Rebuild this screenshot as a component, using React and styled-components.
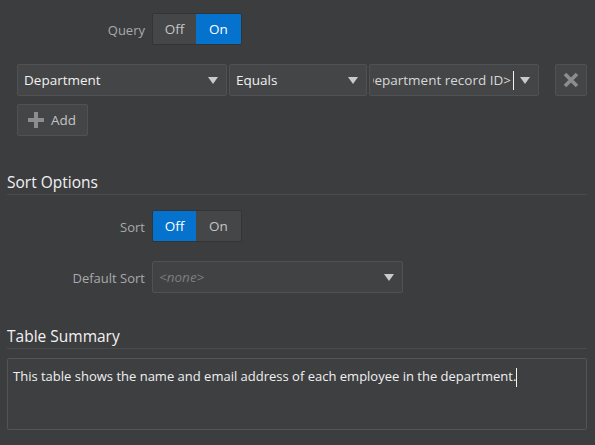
import React from "react";
import styled, { createGlobalStyle } from "styled-components";

const Global = createGlobalStyle`
  html, body { margin: 0; padding: 0; background: #3c3d3f; }
  body { font-family: "Open Sans", "Noto Sans", sans-serif; font-size: 13px; color: #e6e6e6; }
  * { box-sizing: border-box; }
`;

const Page = styled.div`
  width: 595px;
  height: 445px;
  padding: 13px 8px 0 7px;
  display: flex;
  flex-direction: column;
  overflow: hidden;
`;

const FormRow = styled.div`
  display: flex;
  align-items: center;
  gap: 7px;
  margin-top: ${(p) => p.$mt || 0}px;
`;

const Label = styled.div`
  width: 138px;
  text-align: right;
  color: #a9aaab;
  font-size: 13px;
  padding-top: 1px;
`;

const Toggle = styled.div`
  display: flex;
  height: 32px;
  border: 1px solid #333436;
  border-radius: 2px;
  overflow: hidden;
`;

const Seg = styled.div`
  width: ${(p) => p.$w}px;
  display: flex;
  align-items: center;
  justify-content: center;
  background: ${(p) => (p.$on ? "#0572ce" : "#454648")};
  color: ${(p) => (p.$on ? "#ffffff" : "#c4c5c6")};
  font-size: 13.5px;
`;

const FilterRow = styled.div`
  display: flex;
  align-items: center;
  margin-top: 19px;
  padding-left: 10px;
`;

const Select = styled.div`
  width: ${(p) => p.$w}px;
  height: 32px;
  margin-right: ${(p) => p.$mr || 0}px;
  background: ${(p) => (p.$disabled ? "#414244" : "#444547")};
  border: 1px solid #505153;
  border-radius: 2px;
  display: flex;
  align-items: center;
  padding: 0 8px 0 6px;
  color: ${(p) => (p.$disabled ? "#7d7e80" : "#f0f0f0")};
  font-style: ${(p) => (p.$disabled ? "italic" : "normal")};
  font-size: 13.5px;
`;

const SelectText = styled.div`
  flex: 1;
  white-space: nowrap;
  overflow: hidden;
`;

const ClipText = styled.div`
  flex: 1;
  display: flex;
  align-items: center;
  justify-content: flex-end;
  overflow: hidden;
  white-space: nowrap;
  color: #d6d7d8;
  margin-left: -3px;
`;

const Value = styled.span`
  flex: none;
`;

const Caret = styled.span`
  display: inline-block;
  flex: none;
  width: 1px;
  height: 19px;
  background: #f2f2f2;
  margin-left: ${(p) => p.$ml ?? 2}px;
  vertical-align: middle;
`;

const Arrow = styled.svg`
  width: 10px;
  height: 7px;
  flex: none;
  margin-left: 6px;
`;

const IconButton = styled.div`
  width: ${(p) => p.$w}px;
  height: 32px;
  margin-left: ${(p) => p.$ml || 0}px;
  background: #444547;
  border: 1px solid #505153;
  border-radius: 2px;
  display: flex;
  align-items: center;
  justify-content: ${(p) => (p.$center ? "center" : "flex-start")};
  padding: ${(p) => (p.$center ? "0" : "0 0 0 10px")};
  gap: 7px;
  color: #c3c4c5;
  font-size: 13.5px;
`;

const AddWrap = styled.div`
  margin-top: 8px;
  padding-left: 10px;
  display: flex;
`;

const Heading = styled.div`
  margin-top: ${(p) => p.$mt}px;
  font-size: 15.5px;
  line-height: 22px;
  color: #f2f2f2;
  padding-bottom: 1px;
  border-bottom: 1px solid #4a4b4d;
`;

const TextArea = styled.div`
  margin-top: 9px;
  height: 72px;
  border: 1px solid #535456;
  border-radius: 2px;
  background: #3e3f41;
  padding: 7px 5px;
  font-size: 13px;
  color: #f0f0f0;
  line-height: 20px;
`;

const DownArrow = () => (
  <Arrow viewBox="0 0 10 7">
    <path d="M0 0 H10 L5 7 Z" fill="#c9cacb" />
  </Arrow>
);

export default function App() {
  return (
    <>
      <Global />
      <Page>
        <FormRow>
          <Label>Query</Label>
          <Toggle>
            <Seg $w={43}>Off</Seg>
            <Seg $w={45} $on>On</Seg>
          </Toggle>
        </FormRow>

        <FilterRow>
          <Select $w={210} $mr={2}>
            <SelectText>Department</SelectText>
            <DownArrow />
          </Select>
          <Select $w={138} $mr={2}>
            <SelectText>Equals</SelectText>
            <DownArrow />
          </Select>
          <Select $w={170}>
            <ClipText>
              <Value>&lt;Department record ID&gt;</Value>
              <Caret />
            </ClipText>
            <DownArrow />
          </Select>
          <IconButton $w={32} $ml={16} $center>
            <svg width="18" height="18" viewBox="0 0 18 18">
              <path d="M3 3 L15 15 M15 3 L3 15" stroke="#8c8d8e" strokeWidth="3.6" strokeLinecap="butt" />
            </svg>
          </IconButton>
        </FilterRow>

        <AddWrap>
          <IconButton $w={71}>
            <svg width="16" height="16" viewBox="0 0 16 16">
              <path d="M8 0 V16 M0 8 H16" stroke="#8c8d8e" strokeWidth="4" />
            </svg>
            Add
          </IconButton>
        </AddWrap>

        <Heading $mt={35}>Sort Options</Heading>

        <FormRow $mt={15}>
          <Label>Sort</Label>
          <Toggle>
            <Seg $w={43} $on>Off</Seg>
            <Seg $w={45}>On</Seg>
          </Toggle>
        </FormRow>

        <FormRow $mt={19}>
          <Label>Default Sort</Label>
          <Select $w={251} $disabled>
            <SelectText>&lt;none&gt;</SelectText>
            <DownArrow />
          </Select>
        </FormRow>

        <Heading $mt={32}>Table Summary</Heading>

        <TextArea>
          This table shows the name and email address of each employee in the department.
          <Caret $ml={0} />
        </TextArea>
      </Page>
    </>
  );
}
